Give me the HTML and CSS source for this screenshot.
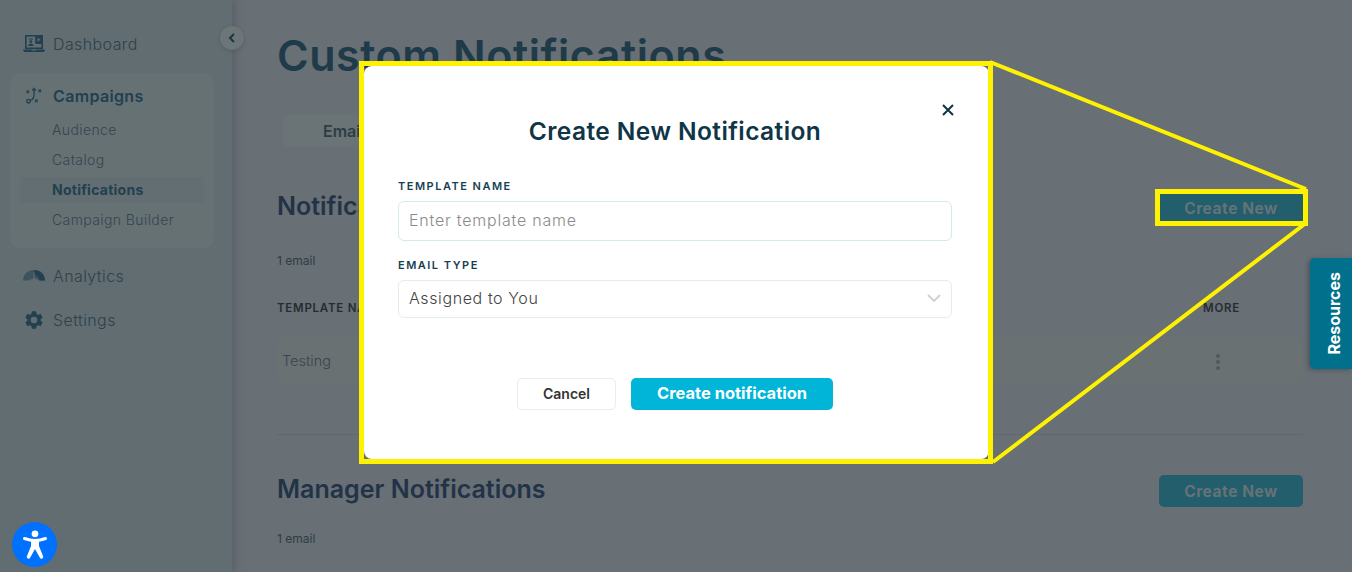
FILE: index.html
```html
<!DOCTYPE html>
<html lang="en">
<head>
<meta charset="utf-8">
<title>Custom Notifications</title>
<link rel="stylesheet" href="styles.css">
</head>
<body>
<div class="app">
  <aside class="sidebar">
    <button class="collapse" aria-label="Collapse"><svg width="8" height="10" viewBox="0 0 8 10"><path d="M6 1 2 5l4 4" fill="none" stroke="#1f3540" stroke-width="2"/></svg></button>
    <nav class="nav">
      <a class="nav-item first">
        <svg class="nav-icon" viewBox="0 0 22 17"><path fill="#22404f" fill-rule="evenodd" d="M2 0h18v14H2zM3.600 1.600v10.800h14.800V9h-6V1.600zM6 3.500h4v1H6zM7.900 5.200a1.400 1.400 0 1 1 0 2.800 1.400 1.400 0 0 1 0-2.800zM5.200 11c0-1.800 1.200-2.600 2.700-2.600s2.700.8 2.700 2.600z"/><path fill="#22404f" d="M12.500 1.500H18.500V8H12.500zM0 14.500h22L21 17H1z"/><path fill="#616d71" d="m14.500 2.800 3 1.900-3 1.900zM9 14.600h4v.9H9z"/></svg>
        <span>Dashboard</span>
      </a>
      <div class="group">
        <a class="nav-item group-head">
          <svg class="nav-icon" viewBox="0 0 18 17"><g fill="none" stroke="#22404f"><circle cx="3" cy="14.200" r="1.800" stroke-width="1.300"/><path stroke-width="1.300" d="M4.800 13.500C8 12.500 9.200 9 8.500 3"/><path stroke-width="1.300" d="m6.800 3.600 1.700-2.300 1.800 2.300"/><path stroke-width="1.100" d="m1 3.500 2.600 2.600M3.600 3.500 1 6.100M13 2.500l2.600 2.600M15.600 2.500 13 5.100M9.500 12.500l2.600 2.600M12.100 12.500l-2.600 2.600"/></g></svg>
          <span>Campaigns</span>
        </a>
        <a class="sub">Audience</a>
        <a class="sub">Catalog</a>
        <a class="sub active">Notifications</a>
        <a class="sub">Campaign Builder</a>
      </div>
      <a class="nav-item analytics">
        <svg class="nav-icon" viewBox="0 0 22 13"><path fill="#3d5460" d="M0 11.500C.3 5 5 1 11 1s10.700 4 11 10.500h-5.500L11 9l-5.500 2.500z"/><path fill="#22404f" d="M11 1c6 0 10.700 4 11 10.500h-5.500C16 8 14 6 11 6z"/><path stroke="#616d71" stroke-width="1" d="M11 3v9"/></svg>
        <span>Analytics</span>
      </a>
      <a class="nav-item settings">
        <svg class="nav-icon gear" viewBox="0 0 24 24"><path fill="#22404f" d="M19.140 12.940c.04-.3.060-.61.060-.94s-.02-.64-.07-.94l2.030-1.580a.49.490 0 0 0 .12-.61l-1.920-3.320a.49.490 0 0 0-.59-.22l-2.390.96a7 7 0 0 0-1.620-.94l-.36-2.540a.48.480 0 0 0-.48-.41h-3.840a.48.480 0 0 0-.47.410l-.36 2.540c-.59.24-1.130.57-1.620.94l-2.390-.96a.48.480 0 0 0-.59.220L2.740 8.870a.48.480 0 0 0 .12.610l2.030 1.580c-.05.3-.09.63-.09.94s.02.640.07.940l-2.030 1.580a.49.490 0 0 0-.12.610l1.920 3.320c.12.220.37.290.59.220l2.390-.96c.5.380 1.030.70 1.620.94l.36 2.540c.05.240.24.410.48.410h3.840c.24 0 .44-.17.47-.41l.36-2.540c.59-.24 1.130-.56 1.620-.94l2.390.96c.22.080.47 0 .59-.22l1.920-3.320a.48.480 0 0 0-.12-.61zM12 15.600a3.600 3.600 0 1 1 0-7.200 3.600 3.600 0 0 1 0 7.200z"/></svg>
        <span>Settings</span>
      </a>
    </nav>
  </aside>

  <main class="main">
    <h1 class="page-title">Custom Notifications</h1>
    <div class="tabs"><div class="tab">Email</div></div>

    <section class="block">
      <div class="block-head">
        <h2>Notifications</h2>
        <button class="create">Create New</button>
      </div>
      <p class="count">1 email</p>
      <div class="table-head"><span>TEMPLATE NAME</span><span>MORE</span></div>
      <div class="row">
        <span>Testing</span>
        <span class="dots"><i></i><i></i><i></i></span>
      </div>
    </section>

    <section class="block second">
      <div class="block-head">
        <h2>Manager Notifications</h2>
        <button class="create">Create New</button>
      </div>
      <p class="count">1 email</p>
    </section>
  </main>
</div>

<button class="resources"><span>Resources</span></button>

<button class="a11y" aria-label="Accessibility">
  <svg width="30" height="32" viewBox="0 0 30 32"><circle cx="15" cy="4.800" r="3.400" fill="#fff"/><path fill="none" stroke="#fff" stroke-width="3" stroke-linecap="round" stroke-linejoin="round" d="M4.500 9.500c3.500 1.300 7 2 10.500 2s7-.7 10.500-2"/><path fill="#fff" d="M11 11h8v6l4.200 10.500a1.800 1.800 0 0 1-3.300 1.300L15 20l-4.900 8.800a1.800 1.800 0 0 1-3.300-1.300L11 17z"/></svg>
</button>

<div class="modal-layer">
  <div class="modal">
    <button class="close" aria-label="Close"><svg width="12" height="12" viewBox="0 0 12 12"><path d="m1 1 10 10M11 1 1 11" stroke="#0f3547" stroke-width="2" fill="none"/></svg></button>
    <h3 class="modal-title">Create New Notification</h3>
    <label class="field-label">TEMPLATE NAME</label>
    <div class="input placeholder">Enter template name</div>
    <label class="field-label type-label">EMAIL TYPE</label>
    <div class="input select">
      <span>Assigned to You</span>
      <svg width="14" height="9" viewBox="0 0 14 9"><path d="m1 1 6 6 6-6" fill="none" stroke="#cfcfcf" stroke-width="1.800"/></svg>
    </div>
    <div class="actions">
      <button class="btn-cancel">Cancel</button>
      <button class="btn-primary">Create notification</button>
    </div>
  </div>
</div>

<svg class="annotation" width="1352" height="572" viewBox="0 0 1352 572" aria-hidden="true">
  <g fill="none" stroke="#fff200">
    <rect stroke-width="5" x="361.500" y="63.500" width="629" height="398"/>
    <rect stroke-width="5" x="1157.500" y="191.500" width="148" height="32"/>
    <path stroke-width="4" d="M990 62 1306 189M993 462 1306 223"/>
  </g>
</svg>
</body>
</html>
```
FILE: styles.css
```css
* { box-sizing: border-box; }
html, body { margin: 0; height: 572px; overflow: hidden; }
body { font-family: Inter, "Noto Sans", sans-serif; background: #686f75; color: #2a3a44; position: relative; }
h1, h2, h3, p { margin: 0; }
button { font-family: inherit; border: 0; padding: 0; }

.app { display: flex; height: 572px; }

.sidebar { position: relative; flex: 0 0 232px; background: #616d71; box-shadow: 4px 0 6px rgba(80,90,96,.55); z-index: 1; }
.collapse { position: absolute; top: 26px; right: -12px; width: 24px; height: 24px; border-radius: 50%; background: #6c7578; display: flex; align-items: center; justify-content: center; box-shadow: 0 1px 3px rgba(60,70,75,.4); }
.nav { padding: 33px 18px 0 10px; display: flex; flex-direction: column; }
.nav-item { display: flex; align-items: center; gap: 8px; font-size: 16px; color: #2f414c; height: 21px; padding-left: 13px; font-weight: 300; letter-spacing: .4px; }
.nav-icon { width: 22px; height: 17px; flex: none; }
.group { margin-top: 19px; height: 175px; background: #667174; border-radius: 10px; padding-top: 12px; display: flex; flex-direction: column; }
.group-head { font-weight: 600; color: #22404f; margin-bottom: 9px; padding-left: 14px; gap: 8px; letter-spacing: .35px; }
.group-head .nav-icon { width: 21px; }
.sub { height: 30px; line-height: 30px; font-size: 14px; color: #34454f; font-weight: 300; margin: 0 10px; padding-left: 32px; letter-spacing: .4px; }
.sub.active { height: 26px; line-height: 26px; margin-top: 2px; margin-bottom: 2px; background: #636e72; font-weight: 700; color: #22404f; letter-spacing: .25px; }
.analytics { margin-top: 17px; }
.settings { margin-top: 23px; }
.gear { height: 22px; margin-top: 1px; }

.main { flex: 1; padding: 30px 49px 0 45px; min-width: 0; }
.page-title { font-size: 43px; line-height: 50px; font-weight: 600; color: #1f3a49; letter-spacing: .55px; }
.tabs { margin-top: 35px; height: 34px; padding-left: 6px; }
.tab { width: 300px; height: 32px; background: #6a7375; border-radius: 5px; padding-left: 40px; font-size: 16px; line-height: 32px; font-weight: 600; color: #2d3d47; }
.block { margin-top: 43px; }
.block-head { display: flex; justify-content: space-between; align-items: center; height: 32px; }
.block-head h2 { font-size: 25px; font-weight: 600; color: #233347; margin-bottom: 5px; }
.create { width: 144px; height: 32px; border-radius: 5px; background: #225e6c; color: #657377; font-size: 15.500px; font-weight: 700; letter-spacing: .55px; }
.count { margin-top: 30px; font-size: 12px; line-height: 14px; color: #2f3d45; }
.table-head { margin-top: 33px; display: flex; justify-content: space-between; font-size: 11.500px; font-weight: 600; color: #262c32; letter-spacing: .75px; padding-right: 63px; }
.row { margin-top: 22px; height: 46px; background: #697173; border-radius: 8px; display: flex; align-items: center; justify-content: space-between; padding: 0 83px 0 5px; font-size: 14.500px; color: #3a464e; font-weight: 300; }
.dots { display: flex; flex-direction: column; gap: 2px; margin-top: 3px; }
.dots i { width: 4px; height: 4px; border-radius: 50%; background: #50595e; }
.block.second { margin-top: 51px; border-top: 1px solid #5f696b; padding-top: 40px; }
.block.second .count { margin-top: 25px; }

.resources { position: absolute; right: 0; top: 258px; width: 42px; height: 111px; padding-left: 6px; background: #00708c; border-radius: 5px 0 0 5px; color: #fff; display: flex; align-items: center; justify-content: center; box-shadow: -2px 1px 4px rgba(50,60,65,.5); z-index: 2; }
.resources span { writing-mode: vertical-rl; transform: rotate(180deg); font-weight: 700; font-size: 16px; }

.a11y { position: absolute; left: 12px; top: 522px; width: 45px; height: 45px; border-radius: 50%; background: #0070ff; display: flex; align-items: center; justify-content: center; z-index: 2; }

.modal-layer { position: absolute; inset: 0; z-index: 3; }
.modal { position: absolute; left: 364px; top: 66px; width: 625px; height: 393px; background: #fff; border-radius: 8px; padding: 0 37px 0 34px; }
.close { position: absolute; top: 38px; right: 35px; width: 12px; height: 12px; background: none; display: flex; }
.modal-title { margin-top: 50px; text-align: center; font-size: 24.500px; line-height: 30px; font-weight: 600; color: #0f3547; letter-spacing: .42px; }
.field-label { display: block; margin-top: 33px; font-size: 11px; line-height: 14px; font-weight: 600; color: #173f52; letter-spacing: 1.500px; }
.type-label { margin-top: 17px; }
.input { margin-top: 8px; height: 40px; border: 1px solid #d6e9ef; border-radius: 6px; display: flex; align-items: center; padding: 0 10px 2px; font-size: 16px; color: #444; font-weight: 300; letter-spacing: .6px; }
.placeholder { color: #8b8b8b; letter-spacing: .78px; }
.select { height: 38px; justify-content: space-between; border-color: #e2edf1; }
.actions { margin-top: 60px; display: flex; justify-content: center; gap: 15px; }
.btn-cancel { width: 99px; height: 32px; background: #fff; border: 1px solid #ececec; border-radius: 5px; font-size: 14px; font-weight: 600; color: #333; padding-bottom: 2px; }
.btn-primary { width: 202px; height: 32px; background: #00b5d8; border-radius: 5px; font-size: 16.500px; font-weight: 700; color: #fff; padding-bottom: 2px; }

.annotation { position: absolute; left: 0; top: 0; z-index: 4; pointer-events: none; }
```
